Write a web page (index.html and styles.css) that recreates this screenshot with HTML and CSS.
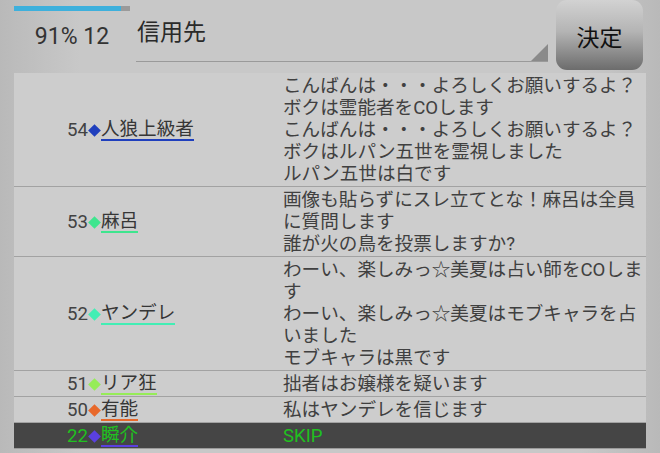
FILE: index.html
```html
<!DOCTYPE html>
<html lang="ja">
<head>
<meta charset="utf-8">
<link rel="stylesheet" href="styles.css">
</head>
<body>
<div class="header">
  <div class="status">
    <div class="progress"><div class="fill"></div></div>
    <div class="count">91% 12</div>
  </div>
  <div class="spinner">信用先<span class="tri"></span></div>
  <div class="button">決定</div>
</div>
<div class="list">
  <div class="row">
    <div class="who"><span class="num">54</span><span class="dia c54"></span><span class="name u54">人狼上級者</span></div>
    <div class="msg">
      <div>こんばんは・・・よろしくお願いするよ？</div>
      <div>ボクは霊能者をCOします</div>
      <div>こんばんは・・・よろしくお願いするよ？</div>
      <div>ボクはルパン五世を霊視しました</div>
      <div>ルパン五世は白です</div>
    </div>
  </div>
  <div class="row">
    <div class="who"><span class="num">53</span><span class="dia c53"></span><span class="name u53">麻呂</span></div>
    <div class="msg">
      <div>画像も貼らずにスレ立てとな！麻呂は全員に質問します</div>
      <div>誰が火の鳥を投票しますか?</div>
    </div>
  </div>
  <div class="row">
    <div class="who"><span class="num">52</span><span class="dia c52"></span><span class="name u52">ヤンデレ</span></div>
    <div class="msg">
      <div>わーい、楽しみっ☆美夏は占い師をCOします</div>
      <div>わーい、楽しみっ☆美夏はモブキャラを占いました</div>
      <div>モブキャラは黒です</div>
    </div>
  </div>
  <div class="row">
    <div class="who"><span class="num">51</span><span class="dia c51"></span><span class="name u51">リア狂</span></div>
    <div class="msg"><div>拙者はお嬢様を疑います</div></div>
  </div>
  <div class="row">
    <div class="who"><span class="num">50</span><span class="dia c50"></span><span class="name u50">有能</span></div>
    <div class="msg"><div>私はヤンデレを信じます</div></div>
  </div>
  <div class="row self">
    <div class="who"><span class="num">22</span><span class="dia c22"></span><span class="name u22">瞬介</span></div>
    <div class="msg"><div>SKIP</div></div>
  </div>
</div>
</body>
</html>
```
FILE: styles.css
```css
html, body {
  margin: 0;
  padding: 0;
}
body {
  width: 660px;
  height: 453px;
  overflow: hidden;
  font-family: "Roboto", "Noto Sans CJK JP", sans-serif;
  color: #3a3a3a;
  background: linear-gradient(to right, #b9b9b9 0, #bcbcbc 14px, #c8c8c8 80px, #c8c8c8 580px, #bcbcbc 646px, #b9b9b9 660px);
}
.header {
  display: flex;
  align-items: flex-start;
  height: 73px;
  padding: 0 16px 0 14px;
}
.status {
  width: 116px;
  display: flex;
  flex-direction: column;
}
.progress {
  margin-top: 6px;
  height: 5px;
  background: #9a9a9a;
}
.fill {
  width: 107px;
  height: 100%;
  background: #3eb0dc;
}
.count {
  margin-top: 12px;
  font-size: 23px;
  line-height: 28px;
  text-align: center;
  color: #333;
}
.spinner {
  position: relative;
  margin-left: 6px;
  width: 411px;
  height: 42px;
  padding: 19px 0 0 1px;
  border-bottom: 1px solid #9a9a9a;
  font-size: 23px;
  line-height: 28px;
  color: #2a2a2a;
}
.tri {
  position: absolute;
  right: 0;
  bottom: 0;
  width: 0;
  height: 0;
  border-left: 17px solid transparent;
  border-bottom: 17px solid #8a8a8a;
}
.button {
  margin-left: 8px;
  width: 87px;
  height: 70px;
  border-radius: 11px;
  background: linear-gradient(#d2d2d2, #b4b4b4 45%, #6c6c6c);
  display: flex;
  align-items: center;
  justify-content: center;
  font-size: 23px;
  color: #111;
  padding-top: 2px;
  box-sizing: border-box;
}
.list {
  margin: 0 14px;
  background: #cdcdcd;
}
.row {
  display: grid;
  grid-template-columns: 269px 1fr;
  padding: 2px 0 1px;
  border-bottom: 1px solid #a2a2a2;
  font-size: 18.6px;
  line-height: 22px;
}
.who {
  display: flex;
  align-items: center;
  padding-left: 53px;
}
.num {
  color: #424242;
}
.dia {
  display: inline-block;
  width: 9px;
  height: 9px;
  margin: 0 2px;
  transform: rotate(45deg);
}
.name {
  display: inline-block;
  line-height: 19px;
  border-bottom: 2px solid;
  color: #363636;
}
.msg {
  color: #404040;
}
.c54 { background: #1f3fbd; }
.u54 { border-color: #1f3fbd; }
.c53 { background: #3ee58e; }
.u53 { border-color: #3ee58e; }
.c52 { background: #42eeb4; }
.u52 { border-color: #42eeb4; }
.c51 { background: #96ec58; }
.u51 { border-color: #96ec58; }
.c50 { background: #e8682a; }
.u50 { border-color: #e8682a; }
.c22 { background: #5a40e0; }
.u22 { border-color: #5a40e0; }
.self {
  background: #454545;
  border-bottom-color: #9a9a9a;
}
.self .num,
.self .name,
.self .msg {
  color: #20c020;
}
```
